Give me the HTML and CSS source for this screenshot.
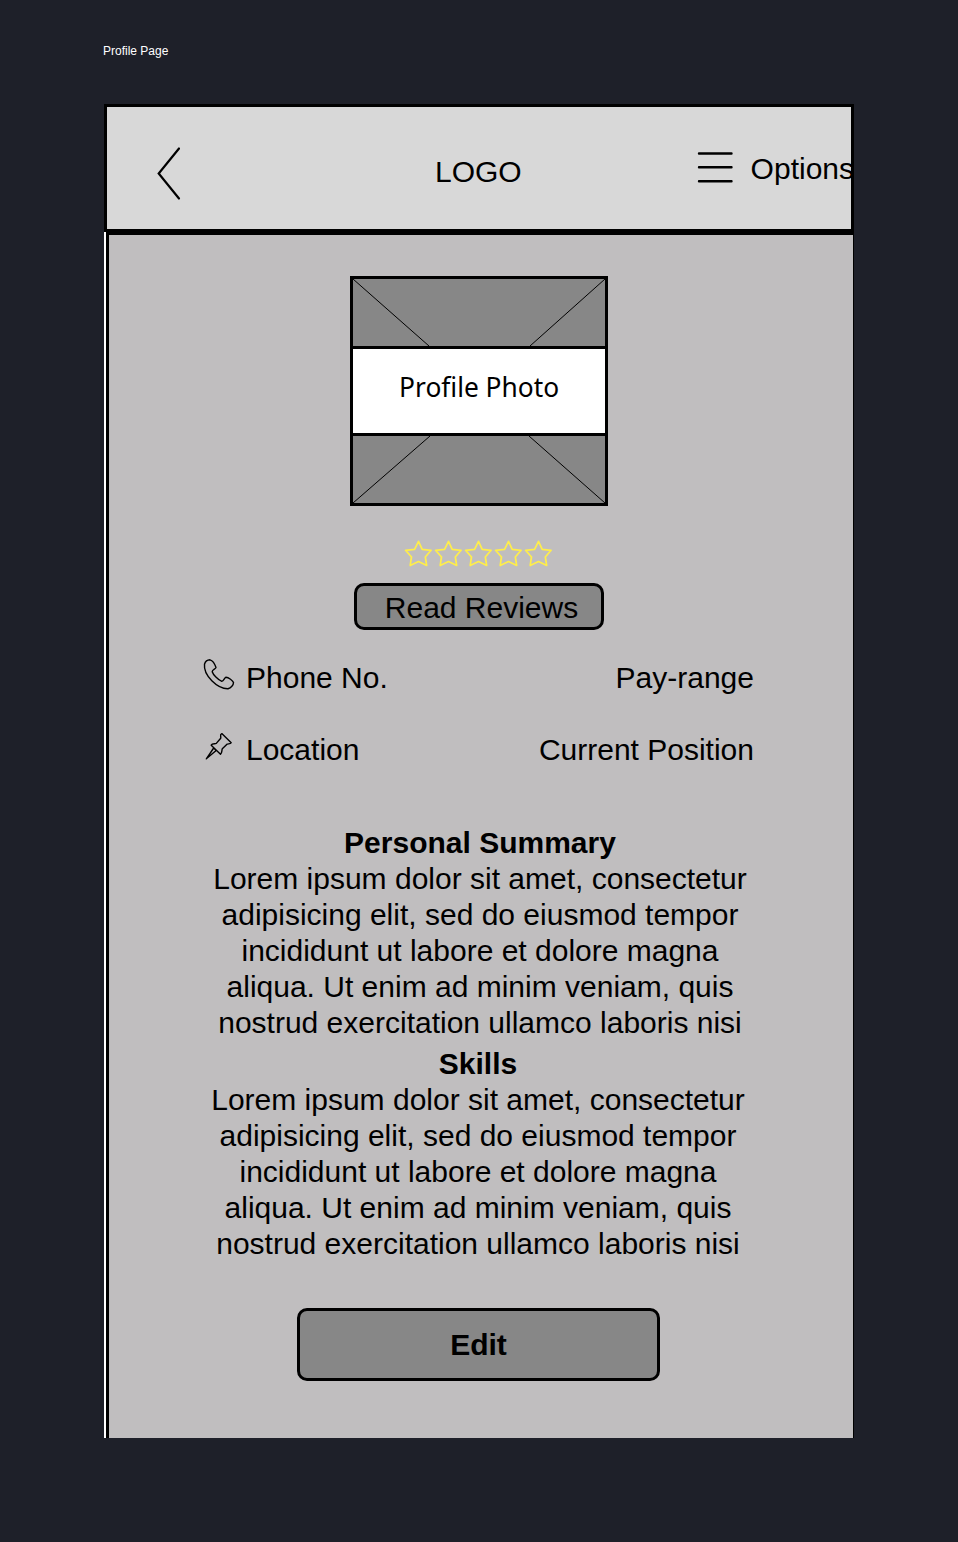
FILE: index.html
```html
<!DOCTYPE html>
<html lang="en">
<head>
<meta charset="utf-8">
<title>Profile Page</title>
<link rel="stylesheet" href="styles.css">
</head>
<body>
<div class="label">Profile Page</div>
<main class="artboard">
  <header class="header">
    <svg class="back" viewBox="0 0 26 56"><path d="M23 3.500 2.700 28.500 23 53.500"/></svg>
    <div class="logo">LOGO</div>
    <div class="menu">
      <svg class="burger" viewBox="0 0 36 34"><path d="M2 2.500H34.500M2 16.300H34.500M2 30.200H34.500"/></svg>
      <span class="options">Options</span>
    </div>
  </header>
  <section class="panel">
    <div class="photo">
      <svg class="cross" viewBox="0 0 252 67"><path d="M0 0 76 67M252 0 177 67"/></svg>
      <div class="caption"><span>Profile Photo</span></div>
      <svg class="cross" viewBox="0 0 252 67"><path d="M0 67 77 0M252 67 176 0"/></svg>
    </div>
    <svg class="stars" viewBox="0 0 150 30">
      <defs><path id="star" d="M14.500 2.300 18.200 10.300 27.100 11.300 21.300 18 22.700 26.500 14.500 22.600 6.200 26.500 7.500 18 1.500 11.300 10.600 10.300Z"/></defs>
      <use href="#star"/><use href="#star" x="30"/><use href="#star" x="60"/><use href="#star" x="90"/><use href="#star" x="120"/>
    </svg>
    <button class="reviews">Read Reviews</button>
    <div class="facts">
      <div class="row">
        <svg class="icon" viewBox="0 0 32 32"><path d="M1.500 5.200C2.200 2.800 4.500 .9 7 .8C9.500 1.500 12 5.500 13 8.500C12.800 10 9 10.500 9.200 12.800C10 15.500 15 21 18.800 22.300C21 22 20.800 19.200 23 18.200C25.500 18.200 30 21.800 30.500 23.500C30.500 26 28 29 25 29.800C14.500 30 .2 16.500 1.500 5.200Z"/></svg>
        <span class="name">Phone No.</span><span class="value">Pay-range</span>
      </div>
      <div class="row">
        <svg class="icon" viewBox="0 0 32 32"><path d="M18.800 2.600 28.200 11.800C27.500 13.200 25.500 12.700 24 13.200L19.300 17.800C18.500 20 19.400 21.500 17.500 23.200L8.200 14.200C9.200 12.300 11.500 13 13.300 12.400L17.700 7.200C18.300 5.500 16.300 3.500 18.800 2.600ZM10.700 17 3.300 27.800 13.200 19.500M10.700 17 13.200 19.500"/></svg>
        <span class="name">Location</span><span class="value">Current Position</span>
      </div>
    </div>
    <article class="text">
      <h2>Personal Summary</h2>
      <p>Lorem ipsum dolor sit amet, consectetur<br>adipisicing elit, sed do eiusmod tempor<br>incididunt ut labore et dolore magna<br>aliqua. Ut enim ad minim veniam, quis<br>nostrud exercitation ullamco laboris nisi</p>
    </article>
    <article class="text skills">
      <h2>Skills</h2>
      <p>Lorem ipsum dolor sit amet, consectetur<br>adipisicing elit, sed do eiusmod tempor<br>incididunt ut labore et dolore magna<br>aliqua. Ut enim ad minim veniam, quis<br>nostrud exercitation ullamco laboris nisi</p>
    </article>
    <button class="edit">Edit</button>
  </section>
</main>
</body>
</html>
```
FILE: styles.css
```css
* { box-sizing: border-box; }
body {
  margin: 0;
  min-height: 1542px;
  padding: 43px 104px 104px;
  background: #1e2029;
  color: #000;
  font: 30px/36px "Liberation Sans", Arial, sans-serif;
  font-kerning: normal;
}
svg { display: block; flex: none; fill: none; stroke: #000; overflow: visible; }
.label { height: 61px; margin-left: -1px; color: #fff; font-size: 12px; line-height: 16px; }
.artboard { width: 750px; height: 1334px; background: #fff; overflow: hidden; }
.header {
  display: grid;
  grid-template-columns: 328px 1fr auto;
  height: 128px;
  padding: 38px 0 0 0;
  border: 3px solid #000;
  background: #d8d8d8;
}
.back { width: 26px; height: 56px; margin-left: 49px; stroke-width: 2.2; stroke-linecap: round; }
.logo { margin-top: 9px; }
.menu { display: flex; gap: 18px; margin-right: -3px; white-space: nowrap; }
.burger { width: 36px; height: 34px; margin-top: 6px; stroke-width: 2.4; stroke-linecap: round; }
.options { margin-top: 6px; }
.panel {
  display: flex;
  flex-direction: column;
  align-items: center;
  height: 1206px;
  margin-left: 2px;
  padding-top: 41px;
  border: solid #000;
  border-width: 3px 1px 0 3px;
  background: #c0bebf;
}
.photo { width: 258px; height: 230px; margin-right: 4px; border: 3px solid #000; background: #878787; }
.cross { width: 252px; height: 67px; stroke-width: 1; }
.caption {
  height: 90px;
  padding-top: 19px;
  border: solid #000;
  border-width: 3px 0;
  background: #fff;
  text-align: center;
  font: 28px/36px "Noto Sans", sans-serif;
}
.caption span { display: inline-block; transform: scaleX(.94); }
.stars { width: 150px; height: 30px; margin: 33px 4px 0 0; stroke: #ffee4a; stroke-width: 1.7; stroke-linejoin: round; }
button { border: 3px solid #000; border-radius: 10px; background: #878787; color: #000; font: inherit; }
.reviews { width: 250px; height: 47px; margin: 14px 4px 0 0; padding: 2px 0 0 5px; }
.facts { display: grid; gap: 36px; width: 550px; margin: 30px 4px 0 0; }
.row { display: flex; }
.icon { width: 32px; height: 32px; margin: -1px 11px 0 -1px; stroke-width: 1.4; stroke-linejoin: round; }
.value { margin-left: auto; }
.text { margin-top: 57px; margin-right: 2px; text-align: center; white-space: nowrap; }
.skills { margin-top: 5px; margin-right: 6px; }
h2, p { margin: 0; font-size: inherit; }
.edit { width: 363px; height: 73px; margin: 46px 5px 0 0; padding: 0; font-weight: bold; }
```
